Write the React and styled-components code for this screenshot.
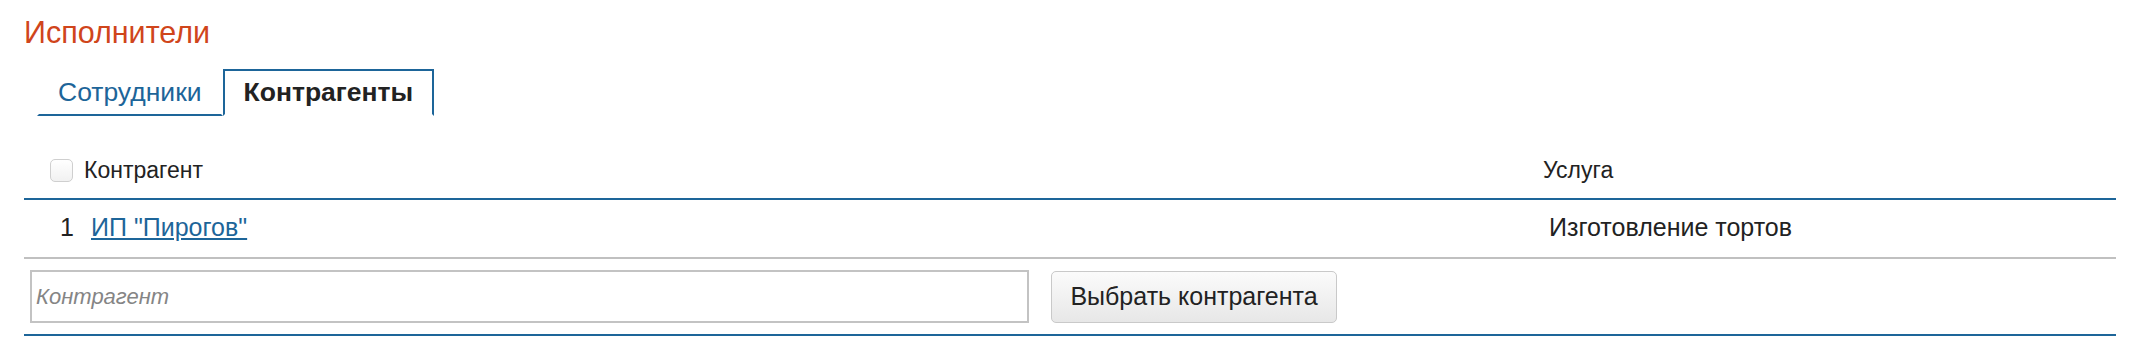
import React, { useState } from 'react';
import styled, { createGlobalStyle } from 'styled-components';

const GlobalStyle = createGlobalStyle`
  html, body {
    margin: 0;
    padding: 0;
    background: #fff;
    font-family: 'Liberation Sans', Arial, Helvetica, sans-serif;
    color: #222;
  }
`;

const BLUE = '#1d6599';

const Page = styled.div`
  padding: 15px 40px 0 24px;
`;

const Title = styled.h2`
  margin: 0;
  font-size: 30.5px;
  line-height: 34px;
  font-weight: normal;
  color: #d0451b;
`;

const Tabs = styled.div`
  display: flex;
  margin: 20px 0 0 13px;
`;

const Tab = styled.button`
  box-sizing: border-box;
  height: 47px;
  padding: 0 19px;
  margin: 0;
  background: #fff;
  font-family: inherit;
  font-size: 26.5px;
  line-height: 43px;
  cursor: pointer;
  border: 2px solid ${({ active }) => (active ? BLUE : 'transparent')};
  border-bottom: 2px solid ${({ active }) => (active ? 'transparent' : BLUE)};
  color: ${({ active }) => (active ? '#222' : BLUE)};
  font-weight: ${({ active }) => (active ? 'bold' : 'normal')};
`;

const Table = styled.table`
  width: 100%;
  margin-top: 20px;
  border-collapse: collapse;
  table-layout: fixed;
  line-height: 26px;
`;

const HeadCell = styled.th`
  text-align: left;
  font-weight: normal;
  font-size: 23px;
  padding: 21px 8px 15px ${({ indent }) => indent}px;
  border-bottom: 2px solid ${BLUE};
`;

const Cell = styled.td`
  font-size: 25px;
  padding: 14px 8px 17px ${({ indent }) => indent}px;
  border-bottom: 2px solid #c0c0c0;
`;

const FooterCell = styled.td`
  padding: 11px 8px 11px 6px;
  border-bottom: 2px solid ${BLUE};
`;

const Flex = styled.div`
  display: flex;
  align-items: center;
  gap: ${({ gap }) => gap}px;
`;

const Checkbox = styled.span`
  box-sizing: border-box;
  width: 23px;
  height: 23px;
  border: 1px solid #cfcfcf;
  border-radius: 5px;
  background: linear-gradient(#ffffff, #f1f1f1);
  cursor: pointer;
`;

const Num = styled.span`
  width: 12px;
  text-align: right;
`;

const Link = styled.a`
  color: ${BLUE};
  text-decoration: underline;
  text-underline-offset: 2px;
  cursor: pointer;
`;

const Input = styled.input`
  box-sizing: border-box;
  width: 999px;
  height: 53px;
  border: 2px solid #c3c3c3;
  padding: 0 4px;
  font-family: inherit;
  font-size: 22px;
  color: #222;
  outline: none;
  &::placeholder {
    color: #858585;
    font-style: italic;
  }
`;

const Button = styled.button`
  box-sizing: border-box;
  width: 286px;
  height: 52px;
  border: 1px solid #c9c9c9;
  border-radius: 5px;
  background: linear-gradient(#fbfbfb, #e7e7e7);
  font-family: inherit;
  font-size: 25px;
  color: #222;
  cursor: pointer;
`;

const rows = [{ id: 1, name: 'ИП "Пирогов"', service: 'Изготовление тортов' }];

export default function App() {
  const [tab, setTab] = useState('contractors');
  return (
    <Page>
      <GlobalStyle />
      <Title>Исполнители</Title>
      <Tabs>
        <Tab active={tab === 'staff'} onClick={() => setTab('staff')}>Сотрудники</Tab>
        <Tab active={tab === 'contractors'} onClick={() => setTab('contractors')}>Контрагенты</Tab>
      </Tabs>
      <Table>
        <colgroup>
          <col style={{ width: 1512 }} />
          <col />
        </colgroup>
        <thead>
          <tr>
            <HeadCell indent={26}>
              <Flex gap={11}>
                <Checkbox />
                <span>Контрагент</span>
              </Flex>
            </HeadCell>
            <HeadCell indent={7}>Услуга</HeadCell>
          </tr>
        </thead>
        <tbody>
          {rows.map(r => (
            <tr key={r.id}>
              <Cell indent={36}>
                <Flex gap={19}>
                  <Num>{r.id}</Num>
                  <Link>{r.name}</Link>
                </Flex>
              </Cell>
              <Cell indent={13}>{r.service}</Cell>
            </tr>
          ))}
          <tr>
            <FooterCell colSpan={2}>
              <Flex gap={22}>
                <Input placeholder="Контрагент" />
                <Button>Выбрать контрагента</Button>
              </Flex>
            </FooterCell>
          </tr>
        </tbody>
      </Table>
    </Page>
  );
}
